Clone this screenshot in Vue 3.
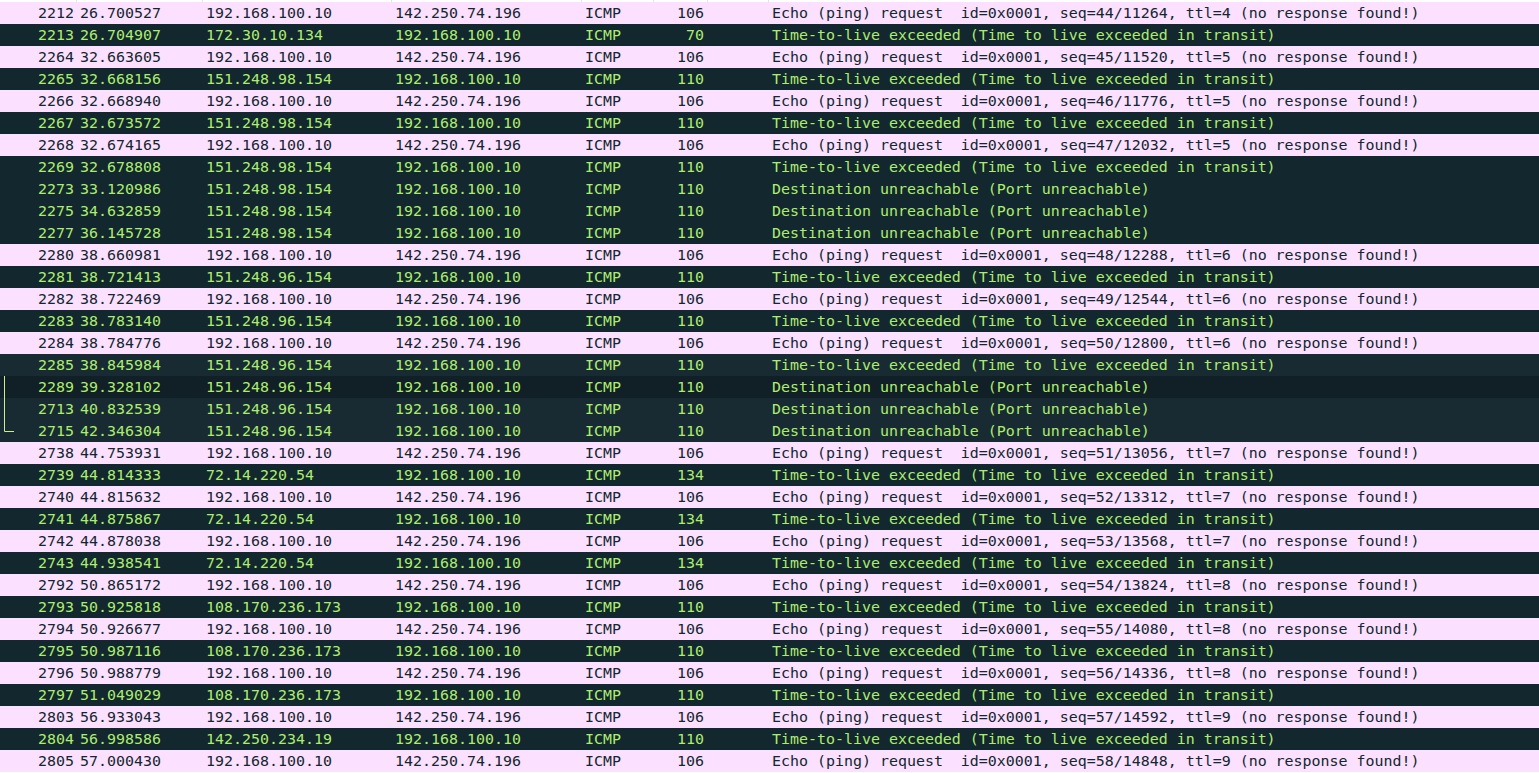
<script setup>
const E = 'Echo (ping) request  id=0x0001, '
const T = 'Time-to-live exceeded (Time to live exceeded in transit)'
const D = 'Destination unreachable (Port unreachable)'
const me = '192.168.100.10'
const g = '142.250.74.196'
const req = (no, time, seq, ttl) => ({ no, time, src: me, dst: g, len: 106, info: `${E}seq=${seq}, ttl=${ttl} (no response found!)`, light: true })
const err = (no, time, src, len = 110, info = T, extra = '') => ({ no, time, src, dst: me, len, info, light: false, extra })
const rows = [
  req(2212, '26.700527', '44/11264', 4),
  err(2213, '26.704907', '172.30.10.134', 70),
  req(2264, '32.663605', '45/11520', 5),
  err(2265, '32.668156', '151.248.98.154'),
  req(2266, '32.668940', '46/11776', 5),
  err(2267, '32.673572', '151.248.98.154'),
  req(2268, '32.674165', '47/12032', 5),
  err(2269, '32.678808', '151.248.98.154'),
  err(2273, '33.120986', '151.248.98.154', 110, D),
  err(2275, '34.632859', '151.248.98.154', 110, D),
  err(2277, '36.145728', '151.248.98.154', 110, D),
  req(2280, '38.660981', '48/12288', 6),
  err(2281, '38.721413', '151.248.96.154'),
  req(2282, '38.722469', '49/12544', 6),
  err(2283, '38.783140', '151.248.96.154'),
  req(2284, '38.784776', '50/12800', 6),
  err(2285, '38.845984', '151.248.96.154', 110, T, 'hover'),
  err(2289, '39.328102', '151.248.96.154', 110, D, 'sel'),
  err(2713, '40.832539', '151.248.96.154', 110, D, 'hover'),
  err(2715, '42.346304', '151.248.96.154', 110, D, 'hover'),
  req(2738, '44.753931', '51/13056', 7),
  err(2739, '44.814333', '72.14.220.54', 134),
  req(2740, '44.815632', '52/13312', 7),
  err(2741, '44.875867', '72.14.220.54', 134),
  req(2742, '44.878038', '53/13568', 7),
  err(2743, '44.938541', '72.14.220.54', 134),
  req(2792, '50.865172', '54/13824', 8),
  err(2793, '50.925818', '108.170.236.173'),
  req(2794, '50.926677', '55/14080', 8),
  err(2795, '50.987116', '108.170.236.173'),
  req(2796, '50.988779', '56/14336', 8),
  err(2797, '51.049029', '108.170.236.173'),
  req(2803, '56.933043', '57/14592', 9),
  err(2804, '56.998586', '142.250.234.19'),
  req(2805, '57.000430', '58/14848', 9),
]
</script>

<template>
  <div class="list">
    <div class="head">
      <span class="hc c-no"></span><span class="hc c-time"></span><span class="hc c-src"></span><span class="hc c-dst"></span><span class="hc c-proto"></span><span class="hc c-len"></span><span class="hc c-gap"></span>
    </div>
    <div v-for="r in rows" :key="r.no" class="row" :class="[r.light ? 'light' : 'dark', r.extra]">
      <span class="c-no">{{ r.no }}</span>
      <span class="c-time">{{ r.time }}</span>
      <span class="c-src">{{ r.src }}</span>
      <span class="c-dst">{{ r.dst }}</span>
      <span class="c-proto">ICMP</span>
      <span class="c-len">{{ r.len }}</span>
      <span class="c-gap"></span>
      <span class="c-info">{{ r.info }}</span>
    </div>
    <svg class="rel" width="16" height="60" viewBox="0 0 16 60"><path d="M4.5 0V55.5H14" fill="none" stroke="#c9f08e" stroke-width="1"/></svg>
  </div>
</template>

<style>
html, body { margin: 0; background: #fff; overflow: hidden; }
</style>

<style scoped>
.list {
  position: relative;
  width: 1539px;
  font-family: "DejaVu Sans Mono", monospace;
  font-size: 14.95px;
}
.head { display: flex; height: 2px; }
.hc { border-right: 1px solid #e3e3e3; box-sizing: border-box; }
.row { display: flex; height: 22px; line-height: 22px; white-space: pre; }
.light { background: #fce0ff; color: #12272e; }
.dark { background: #12272e; color: #aeec6e; }
.hover { background: #182b33; }
.sel { background: #111f26; }
.c-no { width: 77px; flex: none; box-sizing: border-box; padding-right: 3px; text-align: right; }
.c-time { width: 126px; flex: none; box-sizing: border-box; padding-left: 3px; }
.c-src { width: 189px; flex: none; box-sizing: border-box; padding-left: 3px; }
.c-dst { width: 190px; flex: none; box-sizing: border-box; padding-left: 3px; }
.c-proto { width: 72px; flex: none; box-sizing: border-box; padding-left: 3px; }
.c-len { width: 54px; flex: none; box-sizing: border-box; padding-right: 4px; text-align: right; }
.c-gap { width: 61px; flex: none; }
.c-info { flex: 1; box-sizing: border-box; padding-left: 3px; }
.rel { position: absolute; left: 0; top: 376px; }
</style>
